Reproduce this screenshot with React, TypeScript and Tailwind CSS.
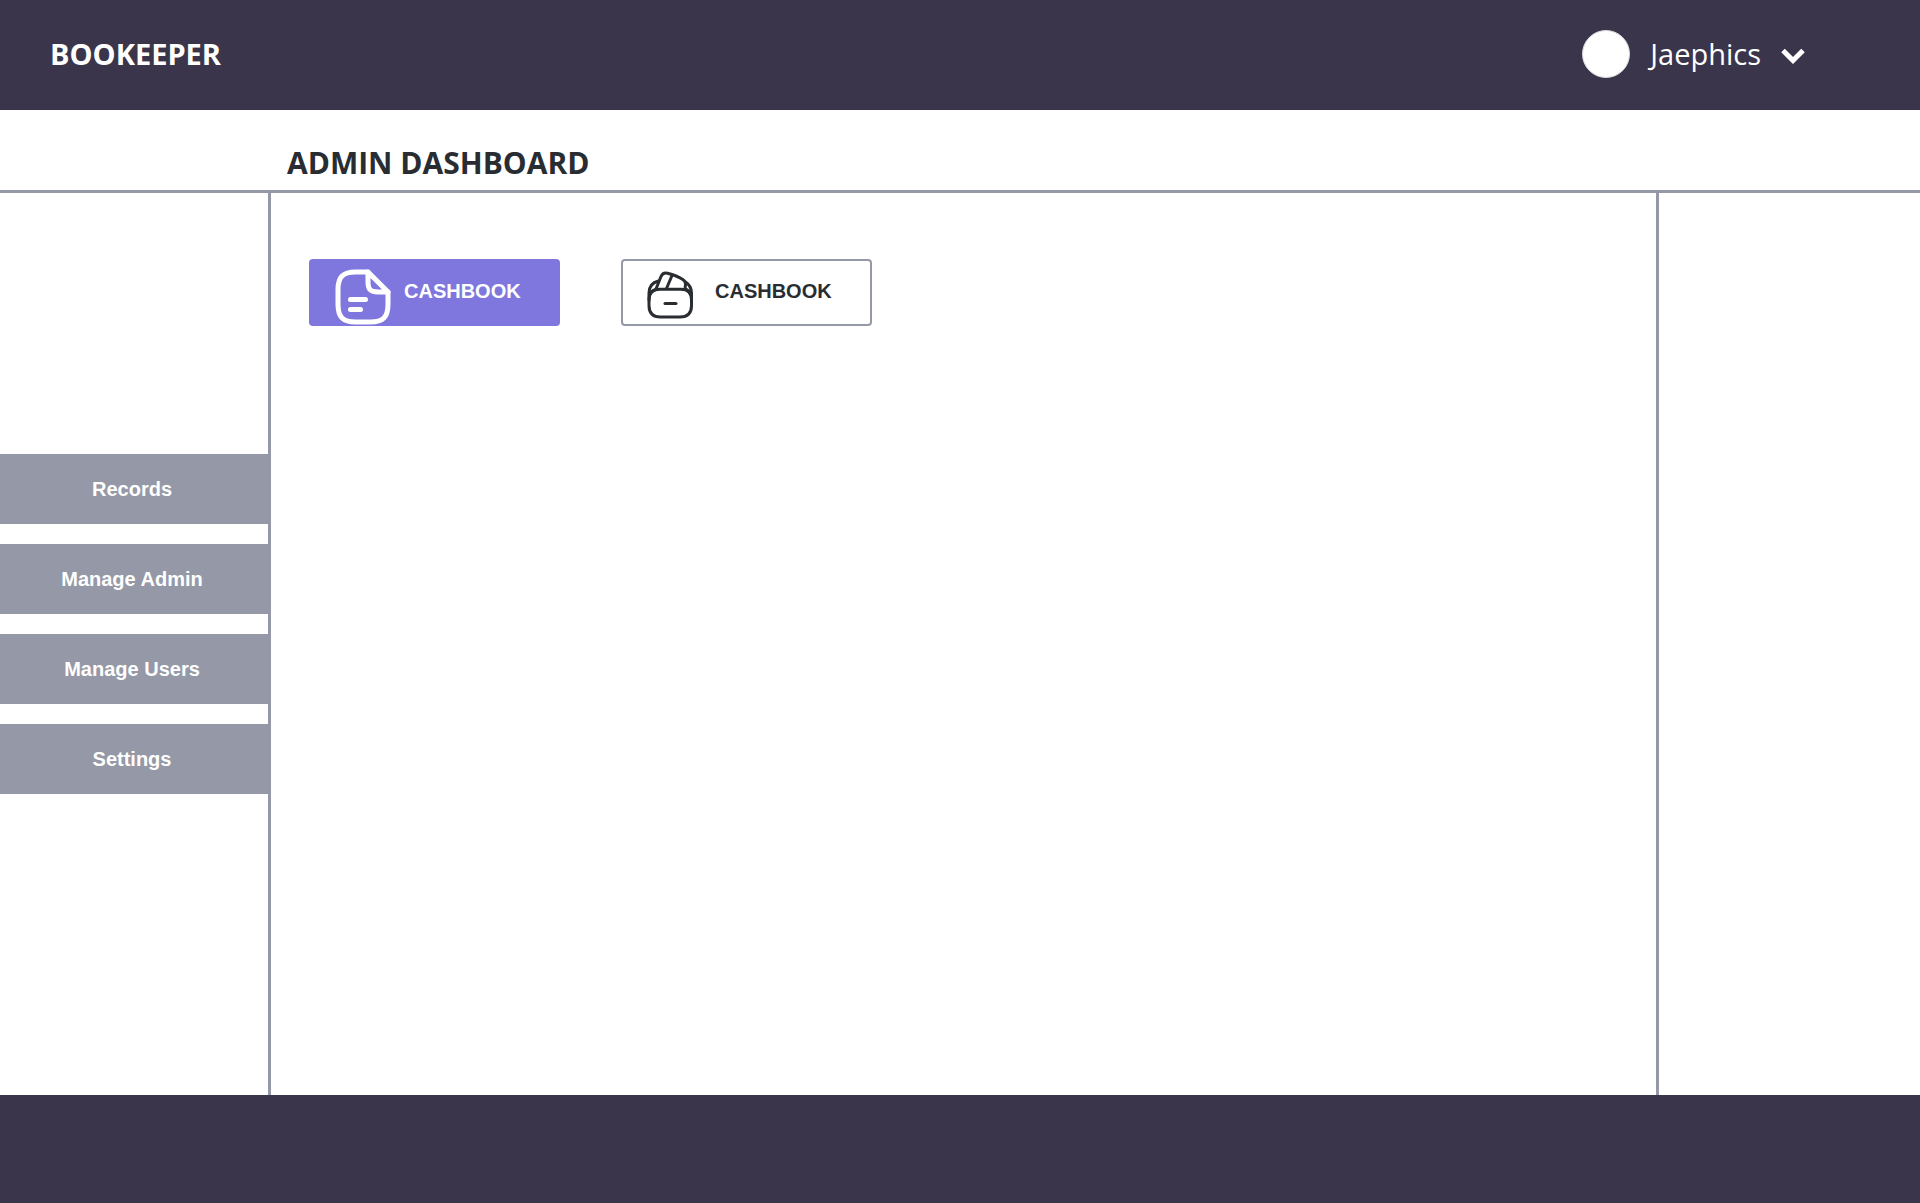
import React from "react";

const navItems = ["Records", "Manage Admin", "Manage Users", "Settings"];

function DocumentIcon() {
  return (
    <svg
      className="size-15 shrink-0"
      viewBox="0 0 24 24"
      fill="none"
      stroke="currentColor"
      strokeWidth="2"
      strokeLinecap="round"
      strokeLinejoin="round"
      aria-hidden="true"
    >
      <path d="M22 10v5c0 5-2 7-7 7H9c-5 0-7-2-7-7V9c0-5 2-7 7-7h5" />
      <path d="M22 10h-4c-3 0-4-1-4-4V2l8 8Z" />
      <path d="M7 13h6M7 17h4" />
    </svg>
  );
}

function WalletIcon() {
  return (
    <svg
      className="size-[50px] shrink-0"
      viewBox="0 0 50 50"
      fill="none"
      stroke="currentColor"
      strokeWidth="3"
      strokeLinecap="round"
      strokeLinejoin="round"
      aria-hidden="true"
    >
      <path d="M15 19.3H36C43 19.3 46.5 23 46.5 30V35.5C46.5 43 42.5 47 35 47H15.5C8 47 4 43 4 35.5V30C4 23 8 19.3 15 19.3Z" />
      <path d="M4 30V23C4 17 7.5 12.5 13.5 11" />
      <path d="M46.5 30V23C46.5 18 44.3 14.5 40.5 12" />
      <path d="M4.5 25C5.5 22 7.5 20.5 10.8 19.5L16 6.5C17.3 3.5 19.5 2.5 22.5 3.3C28 4.8 33 6.5 37.5 9.2C39.8 10.7 40.8 12 40.5 14.5L40 19C43 20 45 22 46 25" />
      <path d="M27 5.5L21.5 18.5" />
      <path d="M20 33.5H31" />
    </svg>
  );
}

export default function App() {
  return (
    <div className="flex min-h-screen flex-col bg-white font-['Liberation_Sans',Arial,sans-serif] text-[#292d32]">
      <header className="flex h-[110px] items-center justify-between bg-[#3b354c] pr-[115px] pb-[3px] pl-[50px] font-['Open_Sans','Noto_Sans',sans-serif] text-white">
        <a href="#" className="text-[29px] leading-9 font-bold">
          BOOKEEPER
        </a>
        <button type="button" className="flex items-center">
          <span className="size-12 rounded-full border border-[#d9d9d9] bg-white" />
          <span className="ml-5 text-[29px] leading-9">Jaephics</span>
          <svg className="mt-1 ml-5 h-4 w-6" viewBox="0 0 24 16" fill="none" stroke="currentColor" strokeWidth="5" aria-hidden="true">
            <path d="M2 2.5L12 12.5L22 2.5" />
          </svg>
        </button>
      </header>

      <div className="border-b-3 border-[#9598a6] pt-[35px] pb-[9px] pl-[287px]">
        <h1 className="font-['Open_Sans','Noto_Sans',sans-serif] text-[30px] leading-9 font-bold">ADMIN DASHBOARD</h1>
      </div>

      <div className="flex flex-1">
        <aside className="w-[271px] shrink-0 border-r-3 border-[#9598a6] pt-[261px]">
          <nav className="flex flex-col gap-5">
            {navItems.map((item) => (
              <a
                key={item}
                href="#"
                className="flex h-[70px] items-center justify-center bg-[#9598a6] pr-1 text-xl font-bold text-white"
              >
                {item}
              </a>
            ))}
          </nav>
        </aside>

        <main className="flex flex-1 flex-wrap content-start items-start gap-[61px] pt-[66px] pl-[38px]">
          <button
            type="button"
            className="flex h-[67px] w-[251px] items-center rounded bg-[#8077de] pt-2 pl-6 text-xl font-bold text-white"
          >
            <DocumentIcon />
            <span className="ml-[11px] pb-3">CASHBOOK</span>
          </button>
          <button
            type="button"
            className="flex h-[67px] w-[251px] items-center rounded border-2 border-[#9598a6] pt-1 pl-[22px] text-xl font-bold"
          >
            <WalletIcon />
            <span className="ml-5 pb-2">CASHBOOK</span>
          </button>
        </main>

        <aside className="w-66 shrink-0 border-l-3 border-[#9598a6]" />
      </div>

      <footer className="h-27 bg-[#3b354c]" />
    </div>
  );
}
